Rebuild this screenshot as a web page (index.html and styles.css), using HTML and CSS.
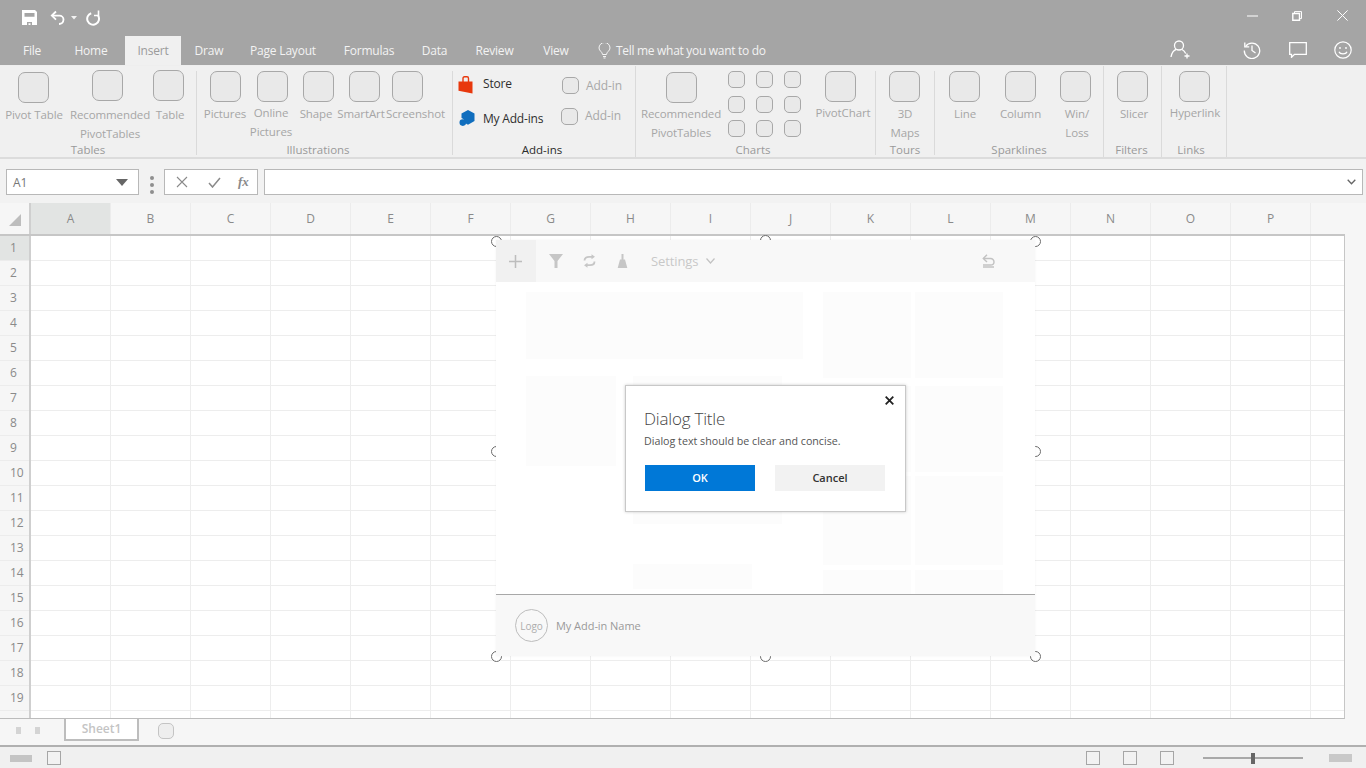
FILE: index.html
```html
<!DOCTYPE html>
<html lang="en">
<head>
<meta charset="utf-8">
<title>Excel add-in dialog</title>
<link rel="stylesheet" href="styles.css">
</head>
<body>
<div class="app">
  <header class="titlebar">
    <div class="qat">
      <svg class="ic ic-save" width="15" height="15" viewBox="0 0 15 15"><path fill="#fff" fill-rule="evenodd" d="M0 0h13l2 2v13H0zM2.500 3v3.800h10V3zM5 12v3h1.500v-1.800H8.500V15H10v-3z"/></svg>
      <svg class="ic ic-undo" width="17" height="16" viewBox="0 0 17 16" fill="none" stroke="#fff" stroke-width="1.800"><path d="M6 1.500 1.800 5.600 6 9.700"/><path d="M2 5.600h7.500a4 4 0 0 1 4 4c0 2.600-2 4.400-4.500 4.400"/></svg>
      <svg class="ic ic-caret" width="6" height="4" viewBox="0 0 6 4"><path fill="#f2f2f2" d="M0 0h6L3 3.500z"/></svg>
      <svg class="ic ic-redo" width="15" height="16" viewBox="0 0 15 16" fill="none" stroke="#fff" stroke-width="2"><path d="M5.200 3.200A5.900 5.900 0 1 0 12 5.500"/><path d="M12.500 .5V5.500H8" stroke-width="1.600"/></svg>
    </div>
    <div class="window-controls">
      <svg width="11" height="2" viewBox="0 0 11 2" class="wc wc-min"><path stroke="#fff" stroke-width="1" d="M0 1h11"/></svg>
      <svg width="10" height="10" viewBox="0 0 10 10" class="wc wc-max" fill="none" stroke="#fff"><path stroke-width="1.400" d="M.8 2.500h6.700v6.800H.8z"/><path stroke-width="1" d="M2.500 2.500V.6h7v7H7.500"/></svg>
      <svg width="11" height="11" viewBox="0 0 11 11" class="wc wc-close" stroke="#fff" stroke-width="1"><path d="M.4.400l10.200 10.200M10.600.400.400 10.600"/></svg>
    </div>
    <nav class="tabrow">
      <span class="tab t-file">File</span>
      <span class="tab t-home">Home</span>
      <span class="tab t-insert active">Insert</span>
      <span class="tab t-draw">Draw</span>
      <span class="tab t-layout">Page Layout</span>
      <span class="tab t-formulas">Formulas</span>
      <span class="tab t-data">Data</span>
      <span class="tab t-review">Review</span>
      <span class="tab t-view">View</span>
      <span class="tellme">
        <svg width="13" height="16" viewBox="0 0 13 16" fill="none" stroke="#f4f4f4"><path d="M4.500 11.500C4.500 8.800 1 8 1 5a5.500 5.500 0 0 1 11 0c0 3-3.500 3.800-3.500 6.500z"/><path d="M5 13.500h3M5.500 15h2"/></svg>
        Tell me what you want to do
      </span>
      <span class="tab-tools">
        <svg class="tool-share" width="21" height="19" viewBox="0 0 21 19" fill="none" stroke="#fff" stroke-width="1.300"><circle cx="9" cy="5.500" r="4.500"/><path d="M1 17c.5-4 3-7 5-7.500M12 9.500c1.500 .8 3 2.500 3.700 4"/><path d="M17 13.500v5M14.500 16h5"/></svg>
        <svg class="tool-history" width="18" height="18" viewBox="0 0 18 18" fill="none" stroke="#fff" stroke-width="1.300"><path d="M2.600 5.500A7.700 7.700 0 1 1 1.300 9.500"/><path d="M1.800 1.500v4.400h4.400M9 4.500V9.500l3.500 2.500"/></svg>
        <svg class="tool-comment" width="18" height="16" viewBox="0 0 18 16" fill="none" stroke="#fff" stroke-width="1.300"><path d="M.7.700h16.600v11.600H5.500l-3 3v-3H.7z"/></svg>
        <svg class="tool-smile" width="18" height="18" viewBox="0 0 18 18" fill="none" stroke="#fff" stroke-width="1.200"><circle cx="9" cy="9" r="8.200"/><circle cx="6" cy="7" r=".9" fill="#fff" stroke="none"/><circle cx="12" cy="7" r=".9" fill="#fff" stroke="none"/><path d="M5 10.800c1 2.800 7 2.800 8 0"/></svg>
      </span>
    </nav>
  </header>

  <section class="ribbon">
    <div class="group g-tables">
      <div class="items">
        <div class="item i-pivot"><span class="box"></span><span class="lab">Pivot Table</span></div>
        <div class="item i-rec"><span class="box"></span><span class="lab">Recommended</span><span class="lab">PivotTables</span></div>
        <div class="item i-table"><span class="box"></span><span class="lab">Table</span></div>
      </div>
      <div class="grouplabel">Tables</div>
    </div>
    <span class="sep"></span>
    <div class="group g-illus">
      <div class="items">
        <div class="item i-pictures"><span class="box"></span><span class="lab">Pictures</span></div>
        <div class="item i-online"><span class="box"></span><span class="lab">Online</span><span class="lab">Pictures</span></div>
        <div class="item i-shape"><span class="box"></span><span class="lab">Shape</span></div>
        <div class="item i-smart"><span class="box"></span><span class="lab">SmartArt</span></div>
        <div class="item i-screen"><span class="box"></span><span class="lab">Screenshot</span></div>
      </div>
      <div class="grouplabel">Illustrations</div>
    </div>
    <span class="sep"></span>
    <div class="group g-addins">
      <div class="addin-rows">
        <div class="addin-row r-one">
          <svg class="store-ic" width="15" height="18" viewBox="0 0 15 18"><path fill="none" stroke="#e8380d" stroke-width="1.400" d="M5 6V2.500Q5 .8 6.500 .8H9Q10.500 .8 10.500 2.500V6"/><path fill="#e8380d" d="M.5 5.600H14.500V17.500L.5 14.800z"/></svg>
          <span class="addin-name">Store</span>
          <span class="box small"></span>
          <span class="addin-lab">Add-in</span>
        </div>
        <div class="addin-row r-two">
          <svg class="my-ic" width="16" height="17" viewBox="0 0 16 17"><path fill="#106ebe" d="M9 0 15.500 3.500V11L9 14.700 5.500 12.800A4.500 4.500 0 0 0 2.500 8V3.500z"/><circle cx="3.800" cy="12.600" r="3.300" fill="#106ebe"/></svg>
          <span class="addin-name">My Add-ins</span>
          <span class="box small"></span>
          <span class="addin-lab">Add-in</span>
        </div>
      </div>
      <div class="grouplabel dark">Add-ins</div>
    </div>
    <span class="sep tall"></span>
    <div class="group g-charts">
      <div class="items">
        <div class="item i-chartrec"><span class="box"></span><span class="lab">Recommended</span><span class="lab">PivotTables</span></div>
        <div class="chartgrid">
          <span class="box small"></span><span class="box small"></span><span class="box small"></span>
          <span class="box small"></span><span class="box small"></span><span class="box small"></span>
          <span class="box small"></span><span class="box small"></span><span class="box small"></span>
        </div>
        <div class="item i-pchart"><span class="box"></span><span class="lab">PivotChart</span></div>
      </div>
      <div class="grouplabel">Charts</div>
    </div>
    <span class="sep"></span>
    <div class="group g-maps">
      <div class="items">
        <div class="item i-maps"><span class="box"></span><span class="lab">3D</span><span class="lab">Maps</span></div>
      </div>
      <div class="grouplabel">Tours</div>
    </div>
    <span class="sep"></span>
    <div class="group g-spark">
      <div class="items">
        <div class="item i-line"><span class="box"></span><span class="lab">Line</span></div>
        <div class="item i-column"><span class="box"></span><span class="lab">Column</span></div>
        <div class="item i-win"><span class="box"></span><span class="lab">Win/</span><span class="lab">Loss</span></div>
      </div>
      <div class="grouplabel">Sparklines</div>
    </div>
    <span class="sep tall"></span>
    <div class="group g-filters">
      <div class="items">
        <div class="item i-slicer"><span class="box"></span><span class="lab">Slicer</span></div>
      </div>
      <div class="grouplabel">Filters</div>
    </div>
    <span class="sep tall"></span>
    <div class="group g-links">
      <div class="items">
        <div class="item i-link"><span class="box"></span><span class="lab">Hyperlink</span></div>
      </div>
      <div class="grouplabel">Links</div>
    </div>
    <span class="sep tall"></span>
  </section>

  <section class="formulabar">
    <div class="namebox"><span>A1</span><svg width="12" height="7" viewBox="0 0 12 7"><path fill="#666" d="M0 0h12L6 7z"/></svg></div>
    <div class="dots"><i></i><i></i><i></i></div>
    <div class="fx-buttons">
      <svg width="12" height="12" viewBox="0 0 12 12" stroke="#8a8a8a" stroke-width="1.100"><path d="M1 1l10 10M11 1 1 11"/></svg>
      <svg width="13" height="11" viewBox="0 0 13 11" fill="none" stroke="#8a8a8a" stroke-width="1.500"><path d="M1 6l3.500 4L12 1"/></svg>
      <span class="fx">fx</span>
    </div>
    <div class="formula-input"><svg width="9" height="6" viewBox="0 0 9 6" fill="none" stroke="#666" stroke-width="1.300"><path d="M.7.800 4.500 4.800 8.300.8"/></svg></div>
  </section>

  <section class="sheet">
    <div class="colheads">
      <div class="corner"><svg width="12" height="12" viewBox="0 0 12 12"><path fill="#bdbdbd" d="M12 0v12H0z"/></svg></div>
      <div class="colhead on">A</div><div class="colhead">B</div><div class="colhead">C</div><div class="colhead">D</div><div class="colhead">E</div><div class="colhead">F</div><div class="colhead">G</div><div class="colhead">H</div><div class="colhead">I</div><div class="colhead">J</div><div class="colhead">K</div><div class="colhead">L</div><div class="colhead">M</div><div class="colhead">N</div><div class="colhead">O</div><div class="colhead">P</div>
    </div>
    <div class="gridbody">
      <div class="rowheads">
        <div class="rowhead on">1</div><div class="rowhead">2</div><div class="rowhead">3</div><div class="rowhead">4</div><div class="rowhead">5</div><div class="rowhead">6</div><div class="rowhead">7</div><div class="rowhead">8</div><div class="rowhead">9</div><div class="rowhead">10</div><div class="rowhead">11</div><div class="rowhead">12</div><div class="rowhead">13</div><div class="rowhead">14</div><div class="rowhead">15</div><div class="rowhead">16</div><div class="rowhead">17</div><div class="rowhead">18</div><div class="rowhead">19</div>
      </div>
      <div class="cells"></div>
    </div>
  </section>

  <section class="sheetbar">
    <span class="nav"></span><span class="nav"></span>
    <span class="sheettab">Sheet1</span>
    <span class="addsheet"></span>
  </section>

  <footer class="statusbar">
    <span class="stat-rect"></span>
    <span class="stat-sq first"></span>
    <span class="stat-right">
      <span class="stat-sq"></span><span class="stat-sq"></span><span class="stat-sq"></span>
      <span class="slider"><i></i></span>
      <span class="stat-rect zoomrect"></span>
    </span>
  </footer>

  <div class="addin">
    <span class="handle h-tl"></span><span class="handle h-tm"></span><span class="handle h-tr"></span>
    <span class="handle h-ml"></span><span class="handle h-mr"></span>
    <span class="handle h-bl"></span><span class="handle h-bm"></span><span class="handle h-br"></span>
    <div class="pane">
      <div class="panebar">
        <span class="plus"><svg width="13" height="13" viewBox="0 0 13 13" stroke="#bdbdbd" stroke-width="1.500"><path d="M6.500 0v13M0 6.500h13"/></svg></span>
        <svg class="pi pi-filter" width="14" height="14" viewBox="0 0 14 14"><path fill="#c6c6c6" d="M0 0h14L8.500 7v7h-3V7z"/></svg>
        <svg class="pi pi-sync" width="13" height="14" viewBox="0 0 13 14" fill="none" stroke="#c6c6c6" stroke-width="1.800"><path d="M1.500 6.500C1.500 4 3.500 2.800 6 2.800h3"/><path d="M8.500 .3 12 2.800 8.500 5.300z" fill="#c6c6c6" stroke="none"/><path d="M11.500 7.500C11.500 10 9.500 11.200 7 11.200H4"/><path d="M4.500 8.700 1 11.200l3.500 2.500z" fill="#c6c6c6" stroke="none"/></svg>
        <svg class="pi pi-brush" width="11" height="14" viewBox="0 0 11 14"><path fill="#c6c6c6" d="M4.500 0h2v5.500h1.500l2.300 8.500H.7L3 5.500h1.500z"/></svg>
        <span class="settings">Settings</span>
        <svg class="pi pi-chev" width="9" height="6" viewBox="0 0 9 6" fill="none" stroke="#c2c2c2" stroke-width="1.200"><path d="M.5.500 4.500 5 8.500.500"/></svg>
        <svg class="pi pi-undo" width="13" height="14" viewBox="0 0 13 14" fill="none" stroke="#c2c2c2" stroke-width="1.400"><path d="M5 .8 1.300 4.500 5 8"/><path d="M1.500 4.500h7a3.500 3.500 0 0 1 3.500 3.500c0 1.800-1.500 3-3.500 3H1M1 13h11" /></svg>
      </div>
      <div class="panebody">
        <div class="paneleft">
          <div class="ph ph-wide"></div>
          <div class="panerow">
            <div class="ph ph-a"></div>
            <div class="panecol">
              <div class="ph ph-b"></div>
              <div class="ph ph-c"></div>
            </div>
          </div>
        </div>
        <div class="paneright">
          <div class="ph r1"></div><div class="ph r1"></div>
          <div class="ph r2"></div><div class="ph r2"></div>
          <div class="ph r3"></div><div class="ph r3"></div>
          <div class="ph"></div><div class="ph"></div>
        </div>
      </div>
      <div class="panefoot">
        <span class="logo">Logo</span>
        <span class="addname">My Add-in Name</span>
      </div>
    </div>
    <div class="dialog">
      <svg class="dlg-close" width="9" height="9" viewBox="0 0 9 9" stroke="#222" stroke-width="1.800"><path d="M.7.700l7.600 7.600M8.300.700.700 8.300"/></svg>
      <div class="dlg-title">Dialog Title</div>
      <div class="dlg-text">Dialog text should be clear and concise.</div>
      <div class="dlg-btns">
        <span class="btn primary">OK</span>
        <span class="btn">Cancel</span>
      </div>
    </div>
  </div>
</div>
</body>
</html>
```
FILE: styles.css
```css
* { box-sizing: border-box; }
html, body { margin: 0; padding: 0; }
body { font-family: "Open Sans", "Noto Sans", "Liberation Sans", sans-serif; font-size: 12px; overflow: hidden; background: #fff; }
svg { display: block; flex: none; }

.app { position: relative; width: 1366px; height: 768px; display: flex; flex-direction: column; overflow: hidden; }

/* title bar */
.titlebar { height: 65px; background: #a5a5a5; display: flex; flex-wrap: wrap; align-content: flex-start; justify-content: space-between; flex: none; }
.qat { height: 36px; display: flex; padding: 10px 0 0 22px; align-items: flex-start; }
.ic-undo { margin-left: 13px; }
.ic-caret { margin: 6px 0 0 4px; }
.ic-redo { margin-left: 9px; }
.window-controls { height: 36px; display: flex; padding: 0 18px 0 0; }
.wc-min { margin: 15px 34px 0 0; }
.wc-max { margin: 11px 35px 0 0; }
.wc-close { margin-top: 10px; }
.tabrow { width: 100%; height: 29px; display: flex; padding-left: 7px; color: #f3f3f3; line-height: 29px; letter-spacing: -.2px; }
.tab { display: block; text-align: center; white-space: nowrap; }
.t-file { width: 50px; }
.t-home { width: 68px; }
.t-insert { width: 56px; }
.t-draw { width: 56px; }
.t-layout { width: 92px; }
.t-formulas { width: 80px; }
.t-data { width: 51px; }
.t-review { width: 69px; }
.t-view { width: 54px; }
.tab.active { background: #f0f0f0; color: #9b9b9b; }
.tellme { display: flex; align-items: center; gap: 5px; margin-left: 15px; white-space: nowrap; letter-spacing: -.3px; }
.tab-tools { margin-left: auto; padding-right: 14px; display: flex; align-items: center; }
.tab-tools svg { margin-bottom: 1px; }
.tool-share { margin-right: 52px; }
.tab-tools .tool-share { margin-bottom: 3px; }
.tool-history { margin-right: 28px; }
.tool-comment { margin-right: 27px; }

/* ribbon */
.ribbon { height: 94px; background: #f0f0f0; border-top: 1px solid #eee; border-bottom: 2px solid #dcdcdc; display: flex; flex: none; color: #a6a6a6; font-size: 11.500px; }
.sep { width: 1px; background: #dadada; margin: 5px 0 2px; flex: none; }
.sep.tall { margin: 0; }
.group { display: flex; flex-direction: column; flex: none; }
.grouplabel { height: 16px; line-height: 16px; margin-bottom: -1px; text-align: center; color: #9a9a9a; white-space: nowrap; flex: none; }
.grouplabel.dark { color: #2b2b2b; }
.items { display: flex; align-items: flex-start; flex: 1 1 0; min-height: 0; }
.addin-rows { flex: 1 1 0; min-height: 0; display: flex; flex-direction: column; }
.item { display: flex; flex-direction: column; align-items: center; flex: none; padding-top: var(--top, 5px); }
.box { display: block; width: 31px; height: 31px; background: #e9e9e9; border: 1.500px solid #a8a8a8; border-radius: 7px; margin-left: calc(var(--dx, 0px) * 2); flex: none; }
.box.small { width: 17px; height: 17px; border-radius: 5px; margin-left: 0; }
.lab { height: 19px; line-height: 19px; white-space: nowrap; letter-spacing: -.1px; flex: none; }
.box + .lab { margin-top: var(--lab, 2px); }

.g-tables { width: 196px; }
.g-tables .grouplabel { padding-right: 20px; }
.i-pivot { width: 68px; --top: 6px; --dx: -.5px; --lab: 2px; }
.i-rec { width: 84px; --top: 4px; --dx: -2.500px; --lab: 4px; }
.i-table { width: 36px; --top: 4px; --dx: -1.500px; --lab: 4px; }

.g-illus { width: 255px; }
.g-illus .grouplabel { padding-right: 13px; }
.i-pictures { width: 56px; --dx: .5px; --lab: 2px; }
.i-online { width: 36px; --dx: 1px; --lab: 1px; }
.i-shape { width: 54px; --dx: 2.500px; --lab: 2px; }
.i-smart { width: 36px; --dx: 3.500px; --lab: 2px; }
.i-screen { width: 73px; --dx: -8.500px; --lab: 2px; }

.g-addins { width: 182px; }
.g-addins .grouplabel { padding-right: 4px; }
.addin-row { display: flex; align-items: center; height: 24px; color: #2e2e2e; padding-left: 5px; font-size: 12px; flex: none; }
.r-one { margin-top: 5px; }
.r-two { margin-top: 11px; padding-left: 6px; }
.addin-name { width: 79px; margin-left: 10px; white-space: nowrap; letter-spacing: -.2px; }
.r-two .addin-name { margin-left: 8px; width: 78px; }
.store-ic { margin-top: 4px; }
.r-one .box.small { margin-top: 5px; }
.r-one .addin-lab { margin-top: 4px; }
.r-two .box.small { margin-bottom: 4px; }
.r-two .addin-lab { margin-bottom: 5px; }
.addin-lab { color: #a8a8a8; margin-left: 7px; letter-spacing: -.1px; }

.g-charts { width: 239px; }
.g-charts .grouplabel { padding-right: 5px; }
.i-chartrec { width: 90px; --top: 6px; --dx: .5px; --lab: 1px; }
.chartgrid { width: 73px; margin: 5px 0 0 2px; display: grid; grid-template-columns: repeat(3, 17px); column-gap: 11px; row-gap: 7.500px; }
.i-pchart { width: 64px; margin-left: 10px; --dx: -3px; --lab: 1px; }

.g-maps { width: 58px; }
.i-maps { width: 58px; --top: 5px; --lab: 2px; --dx: -.5px; }

.g-spark { width: 168px; }
.i-line { width: 60px; --dx: -.5px; --lab: 2px; }
.i-column { width: 51px; --lab: 2px; --dx: -.5px; }
.i-win { width: 62px; --dx: -2px; --lab: 2px; }

.g-filters { width: 57px; }
.g-filters .grouplabel { padding-right: 2px; }
.i-slicer { width: 60px; --dx: -1.500px; --lab: 2px; }

.g-links { width: 64px; }
.g-links .grouplabel { padding-right: 6px; }
.i-link { width: 66px; --dx: -1px; --lab: 1px; }

/* formula bar */
.formulabar { height: 44px; background: #f2f2f2; display: flex; flex: none; align-items: flex-start; padding: 10px 3px 0 6px; }
.namebox { width: 133px; height: 26px; background: #fff; border: 1.500px solid #b8b8b8; display: flex; align-items: center; justify-content: space-between; padding: 0 10px 0 6px; color: #777; }
.dots { width: 25px; display: flex; flex-direction: column; align-items: center; gap: 3px; padding-top: 7px; }
.dots i { width: 4px; height: 4px; border-radius: 50%; background: #8f8f8f; }
.fx-buttons { width: 94px; height: 26px; background: #fff; border: 1.500px solid #b8b8b8; display: flex; align-items: center; padding-left: 11px; }
.fx-buttons svg + svg { margin-left: 20px; }
.fx { font-family: "Liberation Serif", serif; font-style: italic; font-weight: 700; color: #8a8a8a; font-size: 13px; margin-left: 17px; }
.formula-input { flex: 1; margin-left: 6px; height: 26px; background: #fff; border: 1.500px solid #b8b8b8; display: flex; align-items: center; justify-content: flex-end; padding-right: 6px; }

/* sheet */
.sheet { flex: none; height: 516px; background: #f6f6f6; display: flex; flex-direction: column; }
.colheads { height: 33px; display: flex; flex: none; border-bottom: 2px solid #c6c6c6; margin-right: 21px; color: #8a8a8a; }
.corner { width: 31px; border-right: 2px solid #cfcfcf; padding: 11px 0 0 9px; }
.colhead { width: 80px; text-align: center; line-height: 31px; border-right: 1px solid #ececec; }
.colhead:first-of-type { width: 79px; }
.colhead.on { background: #e2e4e3; }
.gridbody { flex: 1; display: flex; min-height: 0; margin-right: 21px; border-right: 1px solid #c6c6c6; border-bottom: 1.500px solid #bcbcbc; overflow: hidden; }
.rowheads { width: 31px; flex: none; border-right: 2px solid #cfcfcf; color: #8a8a8a; }
.rowhead { height: 25px; line-height: 24px; padding-left: 10px; text-align: left; border-bottom: 1px solid #ececec; }
.rowhead.on { background: #e2e4e3; }
.cells { flex: 1; background-color: #fff;
  background-image: linear-gradient(to right, #ededed 1px, transparent 1px), linear-gradient(to bottom, #ededed 1px, transparent 1px);
  background-size: 80px 25px; background-position: 79px 24px; }

.sheetbar { height: 26px; background: #f6f6f6; display: flex; flex: none; align-items: flex-start; }
.nav { width: 5px; height: 7px; background: #d4d4d4; margin: 8px 0 0 16px; }
.nav + .nav { margin-left: 14px; }
.sheettab { width: 75px; height: 22px; margin-left: 24px; margin-top: -.5px; background: #fff; border: 2px solid #bdbdbd; border-top: 0; text-align: center; line-height: 19px; color: #c4c4c4; font-weight: 600; }
.addsheet { width: 16px; height: 16px; margin: 4px 0 0 19px; background: #eee; border: 1.500px solid #c4c4c4; border-radius: 5px; }

.statusbar { flex: 1; background: #f0f0f0; border-top: 2px solid #b0b0b0; display: flex; align-items: center; padding-left: 10px; padding-top: 1px; }
.stat-rect { width: 22px; height: 7px; background: #c4c4c4; }
.stat-sq { width: 14px; height: 14px; border: 1.500px solid #a6a6a6; background: #f2f2f2; }
.stat-sq.first { margin-left: 15px; }
.stat-right { margin-left: auto; display: flex; align-items: center; gap: 23px; padding-right: 14px; }
.slider { width: 100px; height: 2px; background: #a8a8a8; margin-left: 6px; display: flex; align-items: center; justify-content: center; }
.slider i { width: 4px; height: 11px; background: #666; }
.zoomrect { width: 23px; height: 8px; margin-left: 3px; background: #c8c8c8; }

/* add-in overlay */
.addin { position: absolute; left: 496px; top: 240px; width: 539px; height: 416px; }
.handle { position: absolute; width: 11px; height: 11px; border-radius: 50%; border: 1.500px solid #6c6c6c; background: #fff; margin: -5.500px 0 0 -5.500px; }
.h-tl { left: 0; top: 1px; }
.h-tm { left: 269px; top: 0; }
.h-tr { left: 539px; top: 1px; }
.h-ml { left: 0; top: 211px; }
.h-mr { left: 539px; top: 211px; }
.h-bl { left: 0; top: 416px; }
.h-bm { left: 269px; top: 416px; }
.h-br { left: 539px; top: 416px; }
.pane { position: absolute; inset: 0; background: #fff; box-shadow: 0 0 2px rgba(0,0,0,.06); display: flex; flex-direction: column; }
.panebar { height: 42px; background: #f8f8f8; display: flex; align-items: center; flex: none; }
.plus { width: 40px; height: 42px; background: #f1f1f1; display: flex; align-items: center; justify-content: center; padding-right: 2px; }
.pi-filter { margin-left: 13px; }
.pi-sync { margin-left: 20px; }
.pi-brush { margin-left: 21px; }
.settings { margin-left: 23px; color: #c8c8c8; font-size: 13px; letter-spacing: -.1px; }
.pi-chev { margin-left: 8px; }
.pi-undo { margin-left: auto; margin-right: 40px; }
.panebody { flex: 1; min-height: 0; overflow: hidden; display: flex; padding: 10px 0 0 30px; }
.ph { background: #fcfcfc; }
.paneleft { width: 277px; display: flex; flex-direction: column; gap: 17px; }
.ph-wide { height: 67px; }
.panerow { display: flex; gap: 17px; }
.ph-a { width: 90px; height: 90px; }
.panecol { display: flex; flex-direction: column; gap: 40px; }
.ph-b { width: 149px; height: 148px; }
.ph-c { width: 119px; height: 25px; }
.paneright { margin-left: 20px; display: grid; grid-template-columns: 88px 88px; column-gap: 4px; grid-template-rows: 94px 90px 94px 30px; }
.r1 { margin-bottom: 8px; }
.r2 { margin-bottom: 4px; }
.r3 { margin-bottom: 5px; }
.panefoot { height: 62px; flex: none; background: #f8f8f8; border-top: 1.500px solid #a8a8a8; display: flex; align-items: center; padding-left: 19px; color: #9a9a9a; }
.logo { width: 33px; height: 33px; border: 1px solid #bdbdbd; border-radius: 50%; font-size: 10px; display: flex; align-items: center; justify-content: center; color: #adadad; }
.addname { margin-left: 8px; font-size: 11px; letter-spacing: -.05px; }

.dialog { position: absolute; left: 129px; top: 145px; width: 281px; height: 127px; background: #fff; border: 1px solid #c8c8c8; box-shadow: 0 0 3px rgba(0,0,0,.2); display: flex; flex-direction: column; padding: 22px 19px 0 18px; }
.dlg-close { position: absolute; right: 11px; top: 10px; }
.dlg-title { font-size: 17px; font-weight: 300; line-height: 22px; color: #444; letter-spacing: -.2px; }
.dlg-text { font-size: 10.700px; line-height: 14px; margin-top: 4px; color: #555; white-space: nowrap; }
.dlg-btns { display: flex; gap: 20px; margin-top: 17px; padding-left: 1px; }
.btn { width: 110px; height: 26px; background: #f2f2f2; color: #333; font-size: 11px; font-weight: 600; text-align: center; line-height: 26px; }
.btn.primary { background: #0078d7; color: #fff; }
```
